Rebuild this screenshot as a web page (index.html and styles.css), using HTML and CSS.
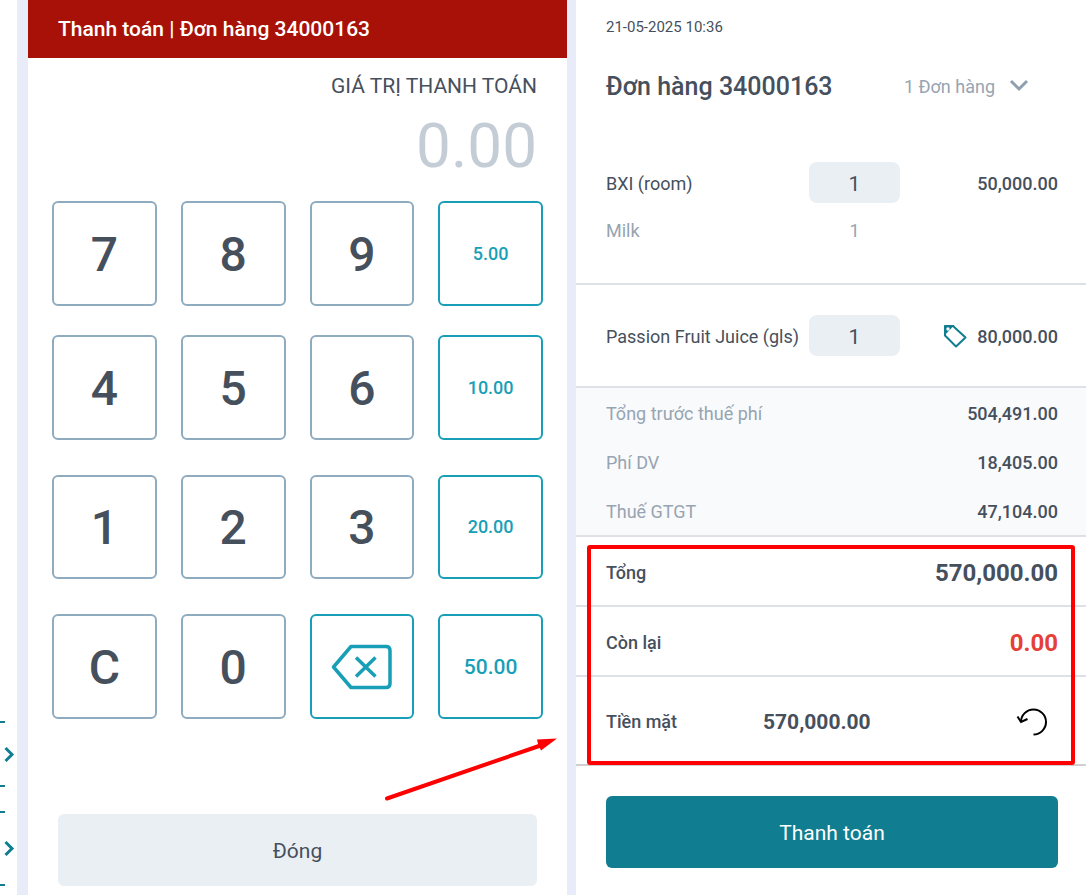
FILE: index.html
```html
<!DOCTYPE html>
<html lang="vi">
<head>
  <meta charset="UTF-8">
  <meta name="viewport" content="width=device-width, initial-scale=1.0">
  <title>Thanh toán</title>
  <link rel="stylesheet" href="styles.css">
</head>
<body>
  <aside class="side-strip">
    <svg class="side-card" width="17" height="66" viewBox="0 0 17 66">
      <path d="M0 1h5M0 65h5"/>
      <path class="chevron" d="M5.500 27l6.500 6.500-6.500 6.500"/>
    </svg>
    <svg class="side-card" width="17" height="75" viewBox="0 0 17 75">
      <path d="M0 1h5M0 74h5"/>
      <path class="chevron" d="M5.500 31l6.500 6.500-6.500 6.500"/>
    </svg>
  </aside>

  <main class="entry">
    <h1 class="entry-header">Thanh toán | Đơn hàng 34000163</h1>
    <div class="amount">
      <div class="amount-label">GIÁ TRỊ THANH TOÁN</div>
      <div class="amount-value">0.00</div>
    </div>

    <div class="keypad">
      <div class="key-row">
        <button type="button" class="key">7</button>
        <button type="button" class="key">8</button>
        <button type="button" class="key">9</button>
        <button type="button" class="key key-quick">5.00</button>
      </div>
      <div class="key-row">
        <button type="button" class="key">4</button>
        <button type="button" class="key">5</button>
        <button type="button" class="key">6</button>
        <button type="button" class="key key-quick">10.00</button>
      </div>
      <div class="key-row">
        <button type="button" class="key">1</button>
        <button type="button" class="key">2</button>
        <button type="button" class="key">3</button>
        <button type="button" class="key key-quick">20.00</button>
      </div>
      <div class="key-row">
        <button type="button" class="key">C</button>
        <button type="button" class="key">0</button>
        <button type="button" class="key key-quick" aria-label="Xóa">
          <svg width="62" height="46" viewBox="0 0 62 46" fill="none" stroke="currentColor" stroke-width="3.500" stroke-linejoin="round">
            <path d="M20 2.500H55Q59 2.500 59 6.500V39.500Q59 43.500 55 43.500H20L2.500 23Z"/>
            <path d="M25 13.500L44.500 32.500M44.500 13.500L25 32.500"/>
          </svg>
        </button>
        <button type="button" class="key key-quick key-quick-lg">50.00</button>
      </div>
    </div>

    <button type="button" class="btn btn-close">Đóng</button>

    <svg class="arrow" width="174" height="66" viewBox="0 0 174 66">
      <path d="M3 62.500L158 9" stroke="#f00" stroke-width="4" stroke-linecap="round"/>
      <path d="M173 2.500L153 3.500L154 8L157 14.500Z" fill="#f00"/>
    </svg>
  </main>

  <section class="order">
    <div class="order-date">21-05-2025 10:36</div>
    <div class="order-head">
      <h2>Đơn hàng 34000163</h2>
      <button type="button" class="order-count">
        1 Đơn hàng
        <svg width="20" height="16" viewBox="0 0 20 16" fill="none" stroke="#8f9fb0" stroke-width="3">
          <path d="M2 2l8 8 8-8"/>
        </svg>
      </button>
    </div>

    <div class="item">
      <div class="item-row">
        <label for="qty1">BXI (room)</label>
        <input type="text" id="qty1" class="qty" value="1">
        <div class="price">50,000.00</div>
      </div>
      <div class="item-row item-extra">
        <span>Milk</span>
        <span class="extra-qty">1</span>
      </div>
    </div>

    <div class="item">
      <div class="item-row">
        <label for="qty2">Passion Fruit Juice (gls)</label>
        <input type="text" id="qty2" class="qty" value="1">
        <div class="price">
          <svg width="24" height="26" viewBox="0 0 24 26">
            <path d="M2 2H10L22.500 13.500L13 22.500L2 11.500Z" fill="none" stroke="#107d90" stroke-width="2" stroke-linejoin="round"/>
            <path fill="#107d90" fill-rule="evenodd" d="M1 3Q1 1 3 1H11.500L1.500 11.500L1 11ZM5 3.300A1.700 1.700 0 1 0 5 6.700A1.700 1.700 0 1 0 5 3.300Z"/>
          </svg>
          80,000.00
        </div>
      </div>
    </div>

    <dl class="fees">
      <div class="fee"><dt>Tổng trước thuế phí</dt><dd>504,491.00</dd></div>
      <div class="fee"><dt>Phí DV</dt><dd>18,405.00</dd></div>
      <div class="fee"><dt>Thuế GTGT</dt><dd>47,104.00</dd></div>
    </dl>

    <div class="totals">
      <div class="total"><span>Tổng</span><strong>570,000.00</strong></div>
      <div class="total"><span>Còn lại</span><strong class="remain">0.00</strong></div>
      <div class="total payment">
        <span>Tiền mặt</span>
        <strong>570,000.00</strong>
        <button type="button" class="undo" aria-label="Hoàn tác">
          <svg width="32" height="30" viewBox="0 0 32 30" fill="none" stroke="#000" stroke-width="2">
            <path d="M17.500 27.500A12.500 12.500 0 1 0 5 15"/>
            <path d="M1.500 9.500L5 15L11.500 12"/>
          </svg>
        </button>
      </div>
      <div class="highlight"></div>
    </div>

    <button type="button" class="btn btn-pay">Thanh toán</button>
  </section>
</body>
</html>
```

FILE: styles.css
```css
* {
  box-sizing: border-box;
}

body {
  margin: 0;
  min-height: 100vh;
  display: flex;
  background-color: #e8ecf9;
  color: #46505d;
  font-family: Roboto, sans-serif;
  font-size: 18px;
  line-height: 24px;
}

button,
input {
  font: inherit;
  color: inherit;
}

button {
  padding: 0;
  border: none;
  background: none;
  cursor: pointer;
}

/* left edge */
.side-strip {
  flex: 0 0 17px;
  margin-right: 11px;
  padding-bottom: 9px;
  display: flex;
  flex-direction: column;
  justify-content: flex-end;
  gap: 24px;
  background-color: #fff;
}

.side-card {
  fill: none;
  stroke: #107d90;
  stroke-width: 2;
}

.side-card .chevron {
  stroke-width: 3;
}

/* payment entry */
.entry {
  position: relative;
  flex: 539 1 0;
  margin-right: 9px;
  padding-bottom: 9px;
  display: flex;
  flex-direction: column;
  background-color: #fff;
}

.entry-header {
  margin: 0;
  padding: 0 30px;
  background-color: #a81108;
  color: #fff;
  font-size: 21px;
  font-weight: 500;
  line-height: 58px;
}

.amount {
  padding: 16px 30px 0;
  text-align: right;
}

.amount-label {
  font-size: 21px;
}

.amount-value {
  color: #c4cdd6;
  font-size: 62px;
  line-height: 96px;
}

.keypad {
  padding: 7px 24px 0;
}

.key-row {
  display: grid;
  grid-template-columns: repeat(4, 1fr);
  gap: 24px;
  margin-bottom: 35px;
}

.key-row:first-child {
  margin-bottom: 29px;
}

.key {
  aspect-ratio: 1;
  display: flex;
  align-items: center;
  justify-content: center;
  padding-top: 3px;
  border: 2px solid #8fabbf;
  border-radius: 6px;
  font-size: 48px;
  font-weight: 500;
}

.key-quick {
  padding-top: 1px;
  border-color: #189fb7;
  color: #189fb7;
  font-size: 18px;
}

.key-quick-lg {
  font-size: 21px;
}

.btn {
  height: 72px;
  padding-top: 2px;
  border-radius: 6px;
  font-size: 21px;
}

.btn-close {
  margin: auto 30px 0;
  background-color: #eaeff4;
}

.arrow {
  position: absolute;
  right: 9px;
  bottom: 93px;
}

/* order summary */
.order {
  flex: 510 1 0;
  display: flex;
  flex-direction: column;
  background-color: #fff;
}

.order-date {
  padding: 15px 28px 0 30px;
  font-size: 15px;
}

.order-head {
  display: flex;
  align-items: center;
  justify-content: space-between;
  height: 93px;
  padding: 2px 57px 0 30px;
}

.order-head h2 {
  margin: 0;
  font-size: 25px;
  font-weight: 500;
}

.order-count {
  display: flex;
  align-items: center;
  gap: 14px;
  color: #97a4b1;
}

.item {
  padding: 30px 28px 30px 30px;
  border-bottom: 2px solid #dee2e7;
}

.item-row {
  display: grid;
  grid-template-columns: 203fr 91px 158fr;
  align-items: center;
}

.item-row label,
.price {
  padding-top: 2px;
}

.qty {
  width: 100%;
  height: 41px;
  padding: 2px 0 0;
  border: none;
  border-radius: 8px;
  background-color: #eaeff4;
  font-size: 21px;
  text-align: center;
}

.price {
  display: flex;
  align-items: center;
  justify-content: flex-end;
  gap: 10px;
  font-weight: 500;
}

.item-extra {
  margin: 16px 0 10px;
  color: #97a4b1;
}

.extra-qty {
  text-align: center;
}

.fees {
  margin: 0;
  background-color: #f9fafc;
  border-bottom: 2px solid #dee2e7;
}

.fee {
  display: flex;
  align-items: center;
  justify-content: space-between;
  height: 49px;
  padding: 2px 28px 0 30px;
}

.fee dt {
  color: #97a4b1;
}

.fee dd {
  margin: 0;
  font-weight: 500;
}

.totals {
  position: relative;
}

.total {
  display: flex;
  align-items: center;
  justify-content: space-between;
  height: 70px;
  padding: 4px 28px 0 30px;
  border-bottom: 2px solid #dee2e7;
  font-weight: 500;
}

.total strong {
  font-size: 24px;
  font-weight: 700;
}

.total .remain {
  color: #e53f38;
}

.payment {
  display: grid;
  grid-template-columns: 157fr 200fr 95fr;
  height: 89px;
  padding-top: 2px;
  border-bottom-color: #d0d0d0;
}

.total.payment strong {
  font-size: 21px;
}

.undo {
  display: flex;
  justify-self: end;
  margin-right: 10px;
}

.highlight {
  position: absolute;
  top: 8px;
  right: 11px;
  bottom: 1px;
  left: 11px;
  border: 4px solid #f00;
  border-radius: 3px;
  pointer-events: none;
}

.btn-pay {
  margin: 30px 28px 27px 30px;
  background-color: #107d90;
  color: #fff;
}
```
